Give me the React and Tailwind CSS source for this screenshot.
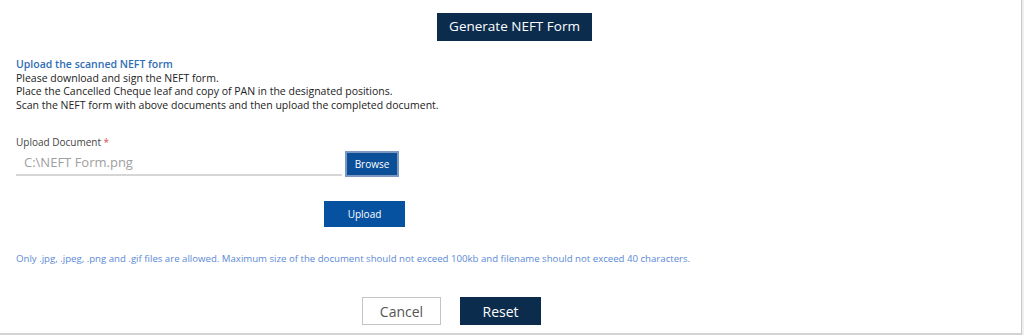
export default function App() {
  return (
    <div className="w-[1024px] h-[335px] bg-white flex overflow-hidden" style={{ fontFamily: '"Open Sans", "Liberation Sans", sans-serif' }}>
      <div className="flex-1 flex flex-col border-b-2 border-[#d4d4d4]">
        <div className="flex pt-[13px] pl-[437px]">
          <button className="w-[155px] h-[28px] bg-[#0b2c4d] text-white text-[13.5px] leading-none">Generate NEFT Form</button>
        </div>

        <div className="mt-[17px] pl-[16px] text-[10.5px] leading-[13.5px] text-[#222]">
          <p className="text-[#2f6eb5] font-semibold">Upload the scanned NEFT form</p>
          <p>Please download and sign the NEFT form.</p>
          <p>Place the Cancelled Cheque leaf and copy of PAN in the designated positions.</p>
          <p>Scan the NEFT form with above documents and then upload the completed document.</p>
        </div>

        <div className="mt-[23px] pl-[16px]">
          <label className="block text-[10px] leading-[14px] text-[#444]">
            Upload Document <span className="text-[#d9534f]">*</span>
          </label>
          <div className="flex items-end mt-[2px]">
            <div className="w-[326px] h-[25px] border-b-2 border-[#d6d6d6] pl-[8px] text-[13px] text-[#a0a0a0] leading-[22px]">
              C:\NEFT Form.png
            </div>
            <button className="ml-[3px] mb-[-1px] w-[54px] h-[26px] bg-[#0a4f98] border-2 border-[#7c98c0] text-white text-[10px]">Browse</button>
          </div>
        </div>

        <div className="flex pl-[324px] mt-[25px]">
          <button className="w-[81px] h-[26px] bg-[#0752a0] text-white text-[10px]">Upload</button>
        </div>

        <p className="pl-[16px] mt-[25px] text-[9.65px] leading-[14px] text-[#5b8ad6]">
          Only .jpg, .jpeg, .png and .gif files are allowed. Maximum size of the document should not exceed 100kb and filename should not exceed 40 characters.
        </p>

        <div className="flex pl-[362px] gap-[19px] mt-[31px]">
          <button className="w-[79px] h-[28px] border border-[#c4c4c4] bg-white text-[#555] text-[14px]">Cancel</button>
          <button className="w-[81px] h-[28px] bg-[#0b2c4d] text-white text-[14px]">Reset</button>
        </div>
      </div>
      <div className="w-[3px] flex flex-col">
        <div className="flex-1 flex">
          <div className="w-[1px] bg-[#c8c8c8]" />
          <div className="flex-1 bg-[#efefef]" />
        </div>
      </div>
    </div>
  );
}
